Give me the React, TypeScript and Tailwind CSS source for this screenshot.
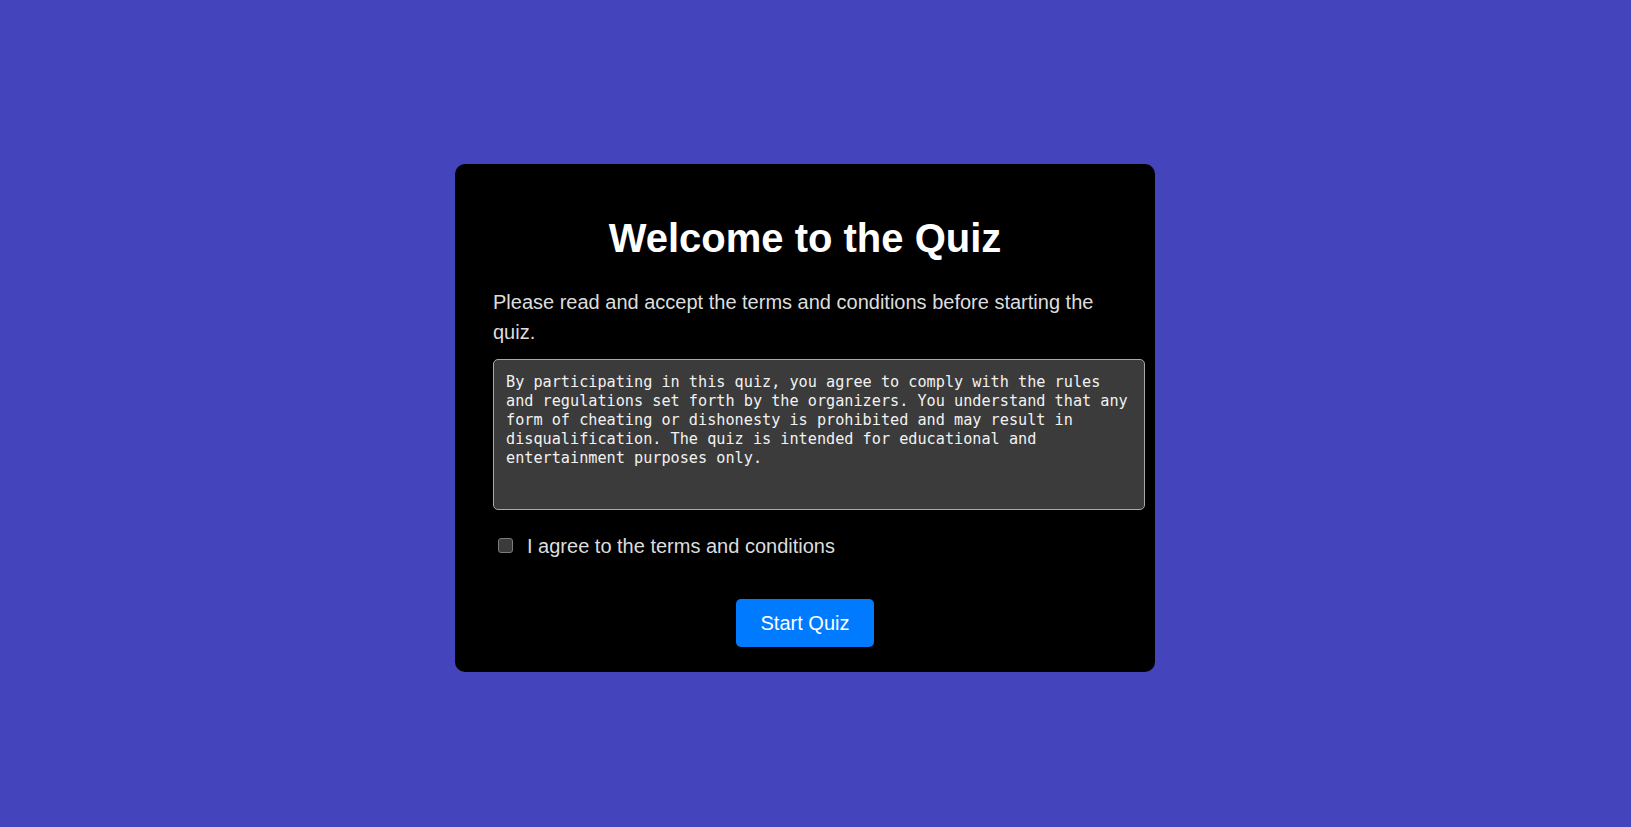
import { useState } from 'react';

const terms =
  'By participating in this quiz, you agree to comply with the rules and regulations set forth by the organizers. You understand that any form of cheating or dishonesty is prohibited and may result in disqualification. The quiz is intended for educational and entertainment purposes only.';

export default function App() {
  const [agreed, setAgreed] = useState(false);

  return (
    <div className="min-h-screen bg-[#4444bc] flex justify-center items-start pt-[164px] pr-[21px] font-['Liberation_Sans',Arial,sans-serif]">
      <div className="w-[700px] bg-black rounded-[10px] px-[38px] pt-[51px] pb-[25px] flex flex-col">
        <h1 className="text-center text-white text-[40px] leading-[46px] font-bold">Welcome to the Quiz</h1>
        <p className="mt-[27px] text-[20px] leading-[29.5px] text-[#dddddd]">
          Please read and accept the terms and conditions before starting the quiz.
        </p>
        <textarea
          readOnly
          value={terms}
          className="mt-[12px] w-[652px] h-[151px] box-border resize-none bg-[#3b3b3b] text-[#f2f2f2] border border-[#a9a9a9] rounded-[5px] px-[12px] pt-[13px] pb-[11px] font-['DejaVu_Sans_Mono',monospace] text-[15.2px] leading-[19px] outline-none"
        />
        <label className="mt-[24px] flex items-center h-[23px] cursor-pointer">
          <input
            type="checkbox"
            checked={agreed}
            onChange={e => setAgreed(e.target.checked)}
            className="appearance-none ml-[5px] w-[15px] h-[15px] rounded-[3px] bg-[#3b3b3b] border-[1.5px] border-[#7c7c7c] checked:bg-[#007bff]"
          />
          <span className="ml-[14px] text-[20px] text-[#dddddd]">I agree to the terms and conditions</span>
        </label>
        <div className="mt-[42px] flex justify-center">
          <button className="h-[48px] px-[25px] bg-[#007bff] text-white text-[20px] rounded-[5px]">Start Quiz</button>
        </div>
      </div>
    </div>
  );
}
